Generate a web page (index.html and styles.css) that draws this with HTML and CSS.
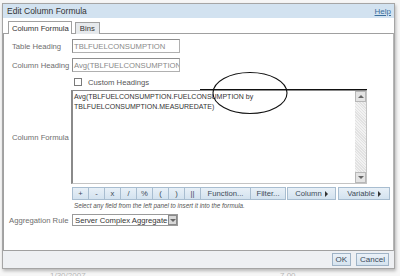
FILE: index.html
```html
<!DOCTYPE html>
<html lang="en">
<head>
  <meta charset="UTF-8">
  <title>Edit Column Formula</title>
  <link rel="stylesheet" href="styles.css">
</head>
<body>
  <div class="page">
    <!-- Ventana de diálogo -->
    <div class="dialog">
      <div class="titlebar">
        <span class="title">Edit Column Formula</span>
        <a class="help" href="#">Help</a>
      </div>

      <div class="tabs">
        <span class="tab active">Column Formula</span>
        <span class="tab">Bins</span>
      </div>

      <div class="panel">
        <div class="row r-table">
          <span class="lbl">Table Heading</span>
          <div class="field">TBLFUELCONSUMPTION</div>
        </div>
        <div class="row r-col">
          <span class="lbl">Column Heading</span>
          <div class="field">Avg(TBLFUELCONSUMPTION.F</div>
        </div>
        <div class="row r-check">
          <span class="lbl"></span>
          <span class="checkbox"></span>
          <span class="check-text">Custom Headings</span>
        </div>
        <div class="row r-formula">
          <span class="lbl">Column Formula</span>
          <div class="formula">
            <div class="formula-text">Avg(TBLFUELCONSUMPTION.FUELCONSUMPTION by<br>TBLFUELCONSUMPTION.MEASUREDATE)</div>
            <div class="scrollbar">
              <span class="sb-btn"><span class="arrow-up"></span></span>
              <span class="sb-track"></span>
              <span class="sb-btn"><span class="arrow-down"></span></span>
            </div>
          </div>
        </div>
        <div class="row r-ops">
          <span class="lbl"></span>
          <div class="ops">
            <span class="op w16">+</span>
            <span class="op w16">-</span>
            <span class="op w16">x</span>
            <span class="op w16">/</span>
            <span class="op w16">%</span>
            <span class="op w16">(</span>
            <span class="op w16">)</span>
            <span class="op w16">||</span>
            <span class="op w50">Function...</span>
            <span class="op w35">Filter...</span>
            <span class="op w49 sep">Column <span class="tri"></span></span>
            <span class="op w51 sep">Variable <span class="tri"></span></span>
          </div>
        </div>
        <div class="row r-hint">
          <span class="lbl"></span>
          <span class="hint">Select any field from the left panel to insert it into the formula.</span>
        </div>
        <div class="row r-agg">
          <span class="lbl">Aggregation Rule</span>
          <div class="select">
            <span class="select-text">Server Complex Aggregate</span>
            <span class="select-btn"><span class="arrow-down"></span></span>
          </div>
        </div>
      </div>

      <div class="footer">
        <span class="btn">OK</span>
        <span class="btn">Cancel</span>
      </div>
    </div>

    <!-- Página de fondo -->
    <div class="backdrop">
      <span class="bg-date">1/30/2007</span>
      <span class="bg-num">7.00</span>
    </div>

    <!-- Anotación dibujada a mano encima -->
    <svg class="annotation" width="400" height="276" viewBox="0 0 400 276">
      <line x1="200" y1="89.5" x2="367" y2="89.5" stroke="#111" stroke-width="1"/>
      <ellipse cx="250" cy="93" rx="37" ry="20.5" fill="none" stroke="#111" stroke-width="1.1"/>
    </svg>
  </div>
</body>
</html>
```

FILE: styles.css
```css
/* Estilos globales */
html, body {
  margin: 0;
  padding: 0;
  background: #fff;
  font-family: "Liberation Sans", Arial, sans-serif;
  font-size: 7.7px;
  color: #333;
}
.page {
  position: relative;
  width: 400px;
  height: 276px;
  overflow: hidden;
  background: #f6f6f6;
  display: flex;
  flex-direction: column;
}
/* Diálogo */
.dialog {
  margin: 3px 0 0 2px;
  width: 393px;
  box-sizing: border-box;
  border: 1px solid #a5a5a5;
  background: #fff;
  box-shadow: 1px 2px 3px rgba(0, 0, 0, 0.25);
  position: relative;
  z-index: 2;
}
.titlebar {
  height: 14px;
  background: #d2e2f0;
  display: flex;
  align-items: center;
  justify-content: space-between;
  padding: 0 3px 0 4px;
}
.title {
  font-size: 8.5px;
  color: #333;
}
.help {
  font-size: 8px;
  color: #3b6f9c;
  text-decoration: underline;
}
/* Pestañas */
.tabs {
  display: flex;
  align-items: flex-end;
  gap: 3px;
  padding: 4px 0 0 5px;
  height: 11px;
}
.tab {
  position: relative;
  z-index: 1;
  height: 11px;
  margin-bottom: -1px;
  border: 1px solid #a0a0a0;
  border-bottom: none;
  padding: 0 4px;
  display: flex;
  align-items: center;
  background: #e6e9ec;
  color: #333;
  white-space: nowrap;
}
.tab.active {
  background: #fff;
  padding: 0 2px 0 3px;
  height: 12px;
}
/* Panel del formulario */
.panel {
  height: 218px;
  box-sizing: border-box;
  border: 1px solid #a0a0a0;
  border-right-color: #b5b5b5;
  display: flex;
  flex-direction: column;
}
.row {
  display: flex;
  align-items: center;
}
.lbl {
  width: 68px;
  flex: none;
  box-sizing: border-box;
  padding-left: 8px;
  color: #6e6e6e;
  white-space: nowrap;
}
.field {
  width: 108px;
  height: 14px;
  box-sizing: border-box;
  border: 1px solid #b0b0b0;
  border-top-color: #8e8e8e;
  border-left-color: #8e8e8e;
  padding-left: 1px;
  color: #8a8a8a;
  display: flex;
  align-items: center;
  overflow: hidden;
  white-space: nowrap;
}
.r-table { margin-top: 5px; }
.r-col { margin-top: 5px; }
.r-check {
  margin-top: 5px;
  height: 10px;
}
.checkbox {
  width: 8px;
  height: 8px;
  margin-left: 2px;
  border: 1px solid #7a7a7a;
  box-sizing: border-box;
  background: #fff;
}
.check-text {
  margin-left: 6px;
  color: #555;
}
/* Área de fórmula */
.r-formula { margin-top: 3px; }
.formula {
  width: 296px;
  height: 94px;
  box-sizing: border-box;
  border: 1px solid #c4c4c4;
  border-top-color: #8a8a8a;
  border-left: 2px solid #8a8a8a;
  display: flex;
  margin-left: -1px;
}
.formula-text {
  flex: 1;
  font-size: 7px;
  line-height: 9.5px;
  padding: 1px 1px;
  color: #333;
}
.scrollbar {
  width: 11px;
  display: flex;
  flex-direction: column;
  background: repeating-linear-gradient(45deg, #e2e2e2 0 1px, #f2f2f2 1px 2px);
}
.sb-btn {
  height: 11px;
  box-sizing: border-box;
  border: 1px solid #b8b8b8;
  background: #e4e4e4;
  display: flex;
  align-items: center;
  justify-content: center;
}
.sb-track { flex: 1; }
.arrow-up {
  width: 0;
  height: 0;
  border-left: 3px solid transparent;
  border-right: 3px solid transparent;
  border-bottom: 3px solid #666;
}
.arrow-down {
  width: 0;
  height: 0;
  border-left: 3px solid transparent;
  border-right: 3px solid transparent;
  border-top: 3px solid #666;
}
/* Barra de operadores */
.r-ops { margin-top: 3px; }
.ops {
  display: flex;
  height: 13px;
}
.op {
  height: 13px;
  box-sizing: border-box;
  border: 1px solid #a8bdd0;
  margin-right: -1px;
  background: linear-gradient(#e8f0f7, #d3e2ef);
  display: flex;
  align-items: center;
  justify-content: center;
  color: #3d4b58;
  font-size: 7.7px;
  white-space: nowrap;
}
.w16 { width: 17px; }
.w50 { width: 51px; }
.w35 { width: 36px; }
.w49 { width: 49px; }
.w51 { width: 52px; }
.op.sep { margin-left: 2px; margin-right: 0; }
.tri {
  display: inline-block;
  width: 0;
  height: 0;
  margin-left: 3px;
  border-top: 3px solid transparent;
  border-bottom: 3px solid transparent;
  border-left: 3px solid #333;
}
.r-hint {
  margin-top: 1px;
  height: 8px;
}
.hint {
  font-size: 6.3px;
  font-style: italic;
  color: #555;
  padding-left: 2px;
  white-space: nowrap;
}
/* Regla de agregación */
.r-agg { margin-top: 5px; }
.r-agg .lbl { padding-left: 5px; }
.select {
  width: 106px;
  height: 12px;
  box-sizing: border-box;
  border: 1px solid #9a9a9a;
  display: flex;
  align-items: center;
  background: #fff;
}
.select-text {
  flex: 1;
  padding-left: 2px;
  color: #333;
  white-space: nowrap;
}
.select-btn {
  width: 9px;
  height: 10px;
  box-sizing: border-box;
  border: 1px solid #8a8a8a;
  background: #d8d8d8;
  display: flex;
  align-items: center;
  justify-content: center;
}
/* Pie con botones */
.footer {
  height: 17px;
  background: #eef0f3;
  display: flex;
  align-items: center;
  justify-content: flex-end;
  gap: 5px;
  padding-right: 5px;
}
.btn {
  height: 13px;
  box-sizing: border-box;
  border: 1px solid #9fb3c6;
  background: linear-gradient(#eaf1f8, #d5e3ef);
  padding: 0 3px;
  display: flex;
  align-items: center;
  font-size: 8px;
  color: #3a4a5a;
}
/* Fondo de la página detrás */
.backdrop {
  flex: 1;
  position: relative;
  font-size: 8px;
  color: #b8b8b8;
}
.bg-date {
  position: absolute;
  left: 50px;
  top: 2px;
}
.bg-num {
  position: absolute;
  left: 280px;
  top: 2px;
}
/* Anotación */
.annotation {
  position: absolute;
  left: 0;
  top: 0;
  z-index: 3;
  pointer-events: none;
}
```
